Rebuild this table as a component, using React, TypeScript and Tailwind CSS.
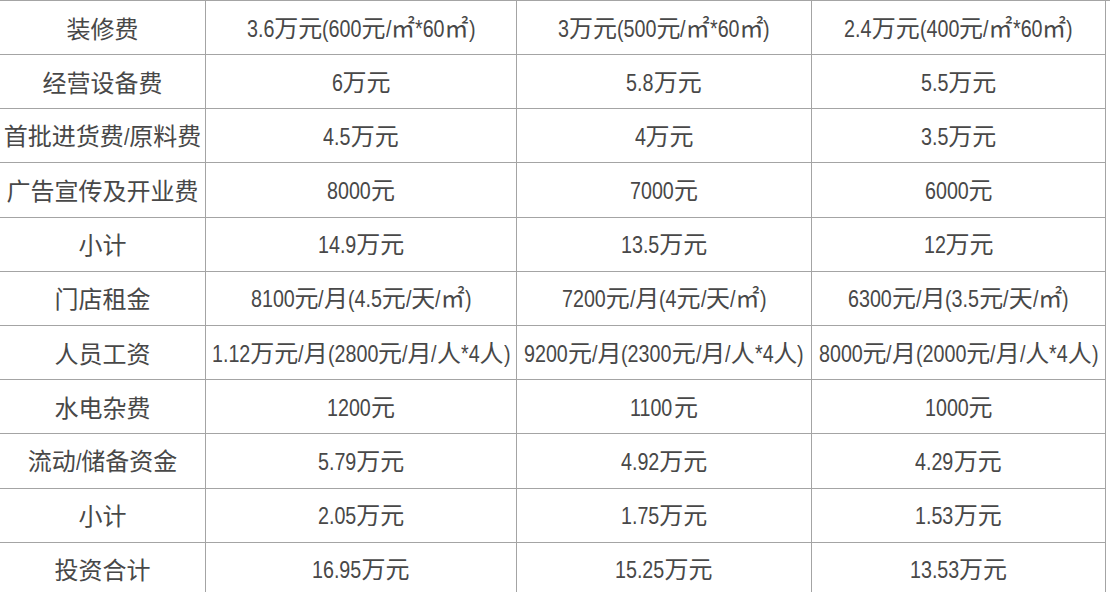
const rows: string[][] = [
  ["装修费", "3.6万元(600元/㎡*60㎡)", "3万元(500元/㎡*60㎡)", "2.4万元(400元/㎡*60㎡)"],
  ["经营设备费", "6万元", "5.8万元", "5.5万元"],
  ["首批进货费/原料费", "4.5万元", "4万元", "3.5万元"],
  ["广告宣传及开业费", "8000元", "7000元", "6000元"],
  ["小计", "14.9万元", "13.5万元", "12万元"],
  ["门店租金", "8100元/月(4.5元/天/㎡)", "7200元/月(4元/天/㎡)", "6300元/月(3.5元/天/㎡)"],
  ["人员工资", "1.12万元/月(2800元/月/人*4人)", "9200元/月(2300元/月/人*4人)", "8000元/月(2000元/月/人*4人)"],
  ["水电杂费", "1200元", "1100元", "1000元"],
  ["流动/储备资金", "5.79万元", "4.92万元", "4.29万元"],
  ["小计", "2.05万元", "1.75万元", "1.53万元"],
  ["投资合计", "16.95万元", "15.25万元", "13.53万元"],
];

// Arial / Liberation Sans advance widths (em)
const advance: Record<string, number> = {
  ".": 0.278,
  "/": 0.278,
  "(": 0.333,
  ")": 0.333,
  "*": 0.389,
  " ": 0.278,
};
const FONT = 24;
const SQUEEZE = 0.82;

function latinWidth(s: string) {
  let w = 0;
  for (const ch of s) w += advance[ch] ?? 0.556;
  return w * FONT * SQUEEZE;
}

function CellText({ text }: { text: string }) {
  const parts = text.split(/([\u0000-\u00ff]+)/).filter(Boolean);
  return (
    <span className="whitespace-nowrap">
      {parts.map((p, k) =>
        /^[\u0000-\u00ff]+$/.test(p) ? (
          <span key={k} className="inline-block" style={{ width: latinWidth(p) }}>
            <span className="inline-block origin-left scale-x-[0.82] font-['Liberation_Sans',sans-serif]">{p}</span>
          </span>
        ) : (
          <span key={k}>{p}</span>
        )
      )}
    </span>
  );
}

export default function App() {
  return (
    <div className="w-[1110px] h-[592px] overflow-hidden bg-white text-[#484848] font-['Noto_Sans_CJK_SC',sans-serif] text-[24px] leading-none">
      <div className="grid grid-cols-[206px_311px_295px_294px] border-t border-[#a4a4a4]">
        {rows.map((row, i) =>
          row.map((cell, j) => (
            <div
              key={`${i}-${j}`}
              className={`flex items-center justify-center border-b border-r border-[#a4a4a4] ${i === 0 ? "h-[54px]" : "h-[54.2px]"}`}
            >
              <CellText text={cell} />
            </div>
          ))
        )}
      </div>
    </div>
  );
}
